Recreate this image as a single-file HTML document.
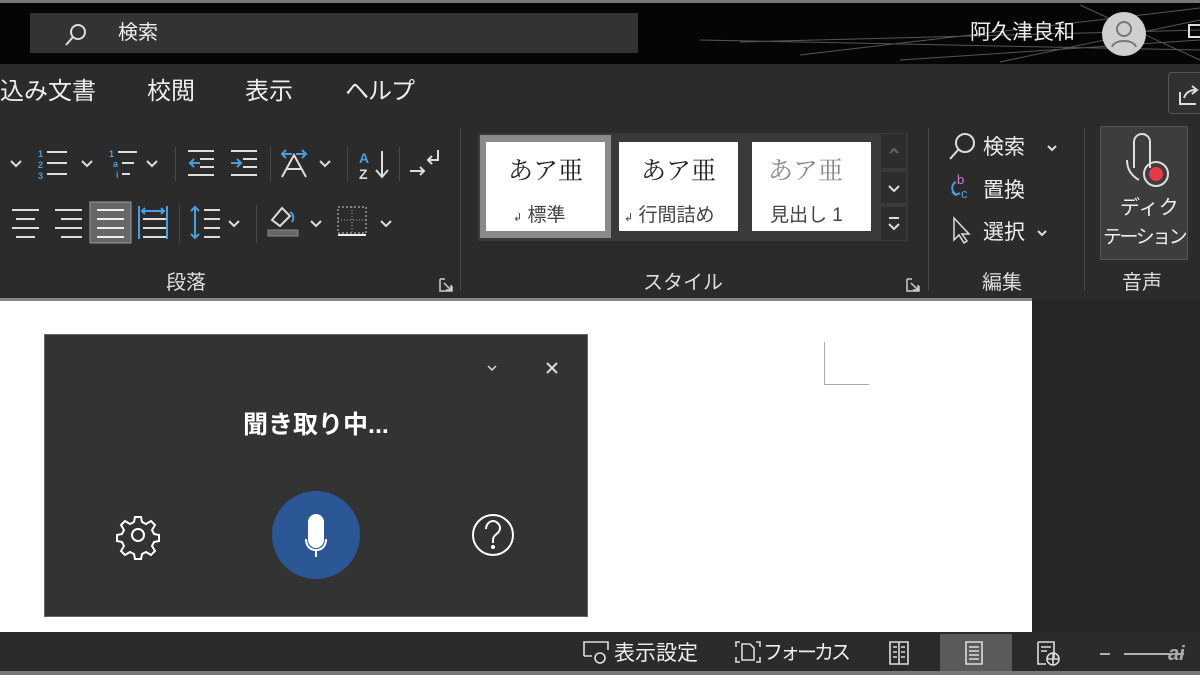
<!DOCTYPE html>
<html><head><meta charset="utf-8"><style>
*{margin:0;padding:0;box-sizing:border-box}
body{width:1200px;height:675px;overflow:hidden;background:#2b2b2b;font-family:"Liberation Sans","Noto Sans CJK JP",sans-serif;color:#fff;position:relative}
.a{position:absolute}
.t{position:absolute;white-space:nowrap;line-height:1}
svg{position:absolute;overflow:visible}
.sep{position:absolute;width:1px;background:#4a4a4a}
.sty{position:absolute;background:#fff;color:#222;top:142px;width:119px;height:89px}
</style></head><body>
<!-- top bar -->
<div class="a" style="left:0;top:0;width:1200px;height:64px;background:#050505"></div>
<div class="a" style="left:0;top:0;width:1200px;height:3px;background:#777"></div>
<svg width="1200" height="64" style="left:0;top:0" stroke="#555" stroke-width="1" fill="none">
<path d="M740 42L1200 30M800 55L1200 8M900 60L1200 40M1080 5L1200 60M1000 62L1200 20M700 40L1200 50"/></svg>
<div class="a" style="left:30px;top:13px;width:608px;height:40px;background:#333"></div>
<svg width="30" height="30" style="left:62px;top:20px" stroke="#ddd" stroke-width="2" fill="none"><circle cx="16" cy="12" r="7"/><path d="M11 17L4 25"/></svg>
<div class="t" style="left:118px;top:23px;font-size:20px;color:#eee">検索</div>
<div class="t" style="left:970px;top:22px;font-size:21px;color:#eee">阿久津良和</div>
<div class="a" style="left:1102px;top:12px;width:44px;height:44px;border-radius:50%;background:#cfcfcf"></div>
<svg width="44" height="44" style="left:1102px;top:12px" stroke="#777" stroke-width="2" fill="none"><circle cx="22" cy="17" r="7"/><path d="M10 35c2-8 22-8 24 0"/></svg>
<div class="a" style="left:1188px;top:24px;width:14px;height:14px;border:2px solid #ddd"></div>
<!-- tabs -->
<div class="t" style="left:0;top:80px;font-size:24px;color:#eee">込み文書</div>
<div class="t" style="left:147px;top:80px;font-size:24px;color:#eee">校閲</div>
<div class="t" style="left:245px;top:80px;font-size:24px;color:#eee">表示</div>
<div class="t" style="left:345px;top:80px;font-size:24px;color:#eee;letter-spacing:-1px">ヘルプ</div>
<div class="a" style="left:1168px;top:72px;width:40px;height:42px;border:1px solid #555;border-radius:4px;background:#303030"></div>
<svg width="30" height="30" style="left:1178px;top:80px" stroke="#ddd" stroke-width="2" fill="none"><path d="M2 12v12h16M6 18c2-6 6-8 12-8M14 6l5 4-5 4"/></svg>
<!-- paragraph group -->
<svg width="460" height="300" style="left:0;top:0" fill="none" stroke-width="2">
<rect x="90" y="202" width="41" height="41" fill="#666" stroke="#999" stroke-width="1"/>
<g stroke="#ddd">
<path d="M11 161l5 5 5-5M82 161l5 5 5-5M147 161l5 5 5-5M320 161l5 5 5-5"/>
<path d="M47 152h20M47 163h20M47 174h20"/>
<path d="M118 152h19M122 163h12M122 174h8"/>
<path d="M188 151h26M200 159h14M200 167h14M188 175h26"/>
<path d="M231 151h26M243 159h14M243 167h14M231 175h26"/>
<path d="M282 177l12-22 12 22M287 169h14"/>
<path d="M382 151v25M376 170l6 7 6-7"/>
<path d="M410 171h14M420 167l4 4-4 4M438 150v10h-10M432 156l-4 4 4 4"/>
<path d="M12 210h27M16 219h19M12 228h27M16 237h19"/>
<path d="M55 210h27M61 219h21M55 228h27M61 237h21"/>
<path d="M97 210h27M97 219h27M97 228h27M97 237h27" stroke="#eee"/>
<path d="M143 219h23M143 228h23M143 237h23"/>
<path d="M204 210h16M204 219h16M204 228h16M204 237h16"/>
<path d="M229 221l5 5 5-5M311 221l5 5 5-5M381 221l5 5 5-5"/>
<path d="M272 220l10-12 8 8-10 10z"/>
</g>
<rect x="268" y="230" width="30" height="6" fill="#666" stroke="#888" stroke-width="1"/>
<path d="M290 212c4 2 4 7 2 10" stroke="#4a9ede"/>
<rect x="338" y="207" width="28" height="26" stroke="#ccc" stroke-width="1" stroke-dasharray="2 2"/>
<path d="M338 220h28M352 207v26" stroke="#aaa" stroke-width="1" stroke-dasharray="1 2"/>
<path d="M338 235h28" stroke="#eee"/>
<g stroke="#4a9ede">
<path d="M190 163h10M194 159l-4 4 4 4"/>
<path d="M231 163h10M237 159l4 4-4 4"/>
<path d="M282 154h10M286 150l-4 4 4 4M296 154h10M302 150l4 4-4 4"/>
<path d="M139 206v33M167 206v33M142 211h22M145 208l-3 3 3 3M161 208l3 3-3 3"/>
<path d="M142 210h22" stroke="none"/>
<path d="M195 207v31M191 211l4-4 4 4M191 234l4 4 4-4"/>
</g>
<g stroke="none" font-family="Liberation Sans" font-weight="bold">
<text x="38" y="157" fill="#4a9ede" font-size="9">1</text><text x="38" y="168" fill="#4a9ede" font-size="9">2</text><text x="38" y="179" fill="#4a9ede" font-size="9">3</text>
<text x="109" y="157" fill="#4a9ede" font-size="9">1</text><text x="113" y="167" fill="#4a9ede" font-size="9">a</text><text x="116" y="178" fill="#4a9ede" font-size="9">i</text>
<text x="359" y="163" fill="#4a9ede" font-size="14">A</text><text x="359" y="179" fill="#ddd" font-size="14">Z</text>
</g>
</svg>
<div class="sep" style="left:175px;top:147px;height:34px"></div>
<div class="sep" style="left:270px;top:147px;height:34px"></div>
<div class="sep" style="left:347px;top:147px;height:34px"></div>
<div class="sep" style="left:399px;top:147px;height:34px"></div>
<div class="sep" style="left:179px;top:205px;height:38px"></div>
<div class="sep" style="left:256px;top:205px;height:38px"></div>
<div class="t" style="left:166px;top:273px;font-size:20px;color:#ddd">段落</div>
<svg width="14" height="14" style="left:439px;top:278px" stroke="#ccc" stroke-width="1.5" fill="none"><path d="M1 1h5M1 1v12h12v-5M5 5l7 7M7 12h5v-5"/></svg>
<div class="sep" style="left:460px;top:128px;height:162px"></div>
<!-- styles -->
<div class="a" style="left:478px;top:133px;width:430px;height:108px;background:#3a3a3a"></div>
<div class="a" style="left:480px;top:135px;width:131px;height:103px;background:#8a8a8a"></div>
<div class="sty" style="left:486px;top:142px"></div>
<div class="sty" style="left:619px"></div>
<div class="sty" style="left:752px"></div>
<div class="t" style="left:508px;top:157px;font-size:25px;color:#222;font-family:'Noto Serif CJK SC',serif">あア亜</div>
<div class="t" style="left:641px;top:157px;font-size:25px;color:#222;font-family:'Noto Serif CJK SC',serif">あア亜</div>
<div class="t" style="left:768px;top:157px;font-size:25px;color:#888;font-family:'Noto Serif CJK SC',serif">あア亜</div>
<div class="t" style="left:513px;top:206px;font-size:19px;color:#444"><span style="font-size:11px">↲</span> 標準</div>
<div class="t" style="left:624px;top:206px;font-size:19px;color:#444"><span style="font-size:11px">↲</span> 行間詰め</div>
<div class="t" style="left:770px;top:206px;font-size:19px;color:#444">見出し 1</div>
<div class="a" style="left:881px;top:134px;width:25px;height:34px;background:#2d2d2d"></div>
<div class="a" style="left:881px;top:172px;width:25px;height:31px;background:#2d2d2d"></div>
<div class="a" style="left:881px;top:207px;width:25px;height:33px;background:#2d2d2d"></div>
<svg width="30" height="110" style="left:881px;top:134px" stroke="#ddd" stroke-width="2" fill="none"><path d="M9 19l4-4 4 4" stroke="#666"/><path d="M8 52l5 5 5-5M8 84h10M8 90l5 5 5-5"/></svg>
<div class="t" style="left:643px;top:273px;font-size:20px;color:#ddd">スタイル</div>
<svg width="14" height="14" style="left:906px;top:278px" stroke="#ccc" stroke-width="1.5" fill="none"><path d="M1 1h5M1 1v12h12v-5M5 5l7 7M7 12h5v-5"/></svg>
<div class="sep" style="left:928px;top:128px;height:162px"></div>
<!-- edit -->
<svg width="40" height="120" style="left:946px;top:130px" stroke="#ddd" stroke-width="2" fill="none"><circle cx="19" cy="13" r="9"/><path d="M12 20L4 29"/><path d="M10 52c-5 2-5 10 0 12M6 62l4 3 4-2" stroke="#4a9ede"/><path d="M8 88v22l5-5 5 8 3-2-5-7h7z" stroke-width="1.5"/></svg>
<div class="t" style="left:957px;top:173px;font-size:13px;color:#c57fd6">b</div>
<div class="t" style="left:961px;top:187px;font-size:13px;color:#4a9ede">c</div>
<div class="t" style="left:983px;top:137px;font-size:21px;color:#eee">検索</div>
<div class="t" style="left:983px;top:180px;font-size:21px;color:#eee">置換</div>
<div class="t" style="left:983px;top:222px;font-size:21px;color:#eee">選択</div>
<svg width="80" height="120" style="left:1030px;top:140px" stroke="#ddd" stroke-width="2" fill="none"><path d="M18 6l4 4 4-4M8 91l4 4 4-4"/></svg>
<div class="t" style="left:982px;top:273px;font-size:20px;color:#ddd">編集</div>
<div class="sep" style="left:1084px;top:128px;height:162px"></div>
<!-- dictate -->
<div class="a" style="left:1100px;top:126px;width:88px;height:134px;background:#3d3d3d;border:1px solid #555"></div>
<svg width="60" height="70" style="left:1118px;top:130px" stroke="#ddd" stroke-width="2" fill="none"><path d="M16 38V12a8 8 0 0 1 16 0v26M9 30c0 10 5 16 12 20"/><circle cx="38" cy="44" r="12"/><circle cx="38" cy="44" r="7" fill="#e8394a" stroke="none"/></svg>
<div class="t" style="left:1120px;top:198px;font-size:20px;color:#eee">ディク</div>
<div class="t" style="left:1103px;top:228px;font-size:19px;color:#eee;letter-spacing:-2.5px">テーション</div>
<div class="t" style="left:1122px;top:273px;font-size:20px;color:#ddd">音声</div>
<!-- document -->
<div class="a" style="left:0;top:300px;width:1032px;height:332px;background:#fff"></div>
<div class="a" style="left:0;top:298px;width:1032px;height:3px;background:#888"></div>
<div class="a" style="left:1032px;top:300px;width:168px;height:332px;background:#262626"></div>
<div class="a" style="left:824px;top:342px;width:45px;height:43px;border-left:1px solid #aaa;border-bottom:1px solid #aaa"></div>
<!-- panel -->
<div class="a" style="left:44px;top:334px;width:544px;height:283px;background:#333;border:1px solid #666"></div>
<svg width="80" height="20" style="left:485px;top:360px" stroke="#ddd" stroke-width="2" fill="none"><path d="M3 6l4 4 4-4" stroke-width="1.5"/><path d="M62 3l10 10M72 3L62 13"/></svg>
<div class="t" style="left:243px;top:413px;font-size:25px;font-weight:bold;color:#fff">聞き取り中...</div>
<div class="a" style="left:272px;top:491px;width:88px;height:88px;border-radius:50%;background:#2b5797"></div>
<svg width="88" height="88" style="left:272px;top:491px" stroke="#fff" stroke-width="2" fill="none"><rect x="37" y="24" width="14" height="32" rx="7" fill="#fff"/><path d="M34 48c0 8 5 11 10 11s10-3 10-11M44 59v7"/></svg>
<svg width="44" height="44" style="left:116px;top:513px" stroke="#fff" stroke-width="2" fill="none"><circle cx="22" cy="22" r="6"/><path d="M19 4h6l1 5 4 2 5-3 4 4-3 5 2 4 5 1v6l-5 1-2 4 3 5-4 4-5-3-4 2-1 5h-6l-1-5-4-2-5 3-4-4 3-5-2-4-5-1v-6l5-1 2-4-3-5 4-4 5 3 4-2z"/></svg>
<svg width="44" height="44" style="left:471px;top:513px" stroke="#fff" stroke-width="2" fill="none"><circle cx="22" cy="22" r="20"/><path d="M15 16c0-5 4-8 7-8s7 3 7 7c0 6-7 6-7 12v3"/><circle cx="22" cy="34" r="1" fill="#fff"/></svg>
<!-- status bar -->
<div class="a" style="left:0;top:632px;width:1200px;height:43px;background:#2b2b2b"></div>
<div class="a" style="left:0;top:671px;width:1200px;height:4px;background:#777"></div>
<div class="a" style="left:940px;top:634px;width:72px;height:37px;background:#5a5a5a"></div>
<svg width="620" height="40" style="left:580px;top:634px" stroke="#ddd" stroke-width="1.6" fill="none">
<path d="M4 22V8h24v8M4 22h8"/><circle cx="20" cy="24" r="5"/>
<path d="M160 8h-4v5M160 28h-4v-5M176 8h4v5M176 28h4v-5M162 10h8l4 4v12h-12z"/>
<path d="M310 8h18v22h-18zM319 8v22M313 13h4M313 18h4M313 23h4M321 13h4M321 18h4M321 23h4"/>
<path d="M386 8h16v22h-16zM389 13h10M389 17h10M389 21h10M389 25h10"/>
<path d="M458 8h16v16M458 8v22h8M461 13h10M461 17h6"/><circle cx="473" cy="25" r="6"/><path d="M467 25h12M473 19v12"/>
<path d="M520 20h10M544 20h60"/></svg>
<div class="t" style="left:614px;top:643px;font-size:21px;color:#eee">表示設定</div>
<div class="t" style="left:763px;top:643px;font-size:20px;color:#eee;letter-spacing:-3px">フォーカス</div>
<div class="t" style="left:1168px;top:644px;font-size:20px;font-style:italic;font-weight:bold;color:#aaa">ai</div>
</body></html>
